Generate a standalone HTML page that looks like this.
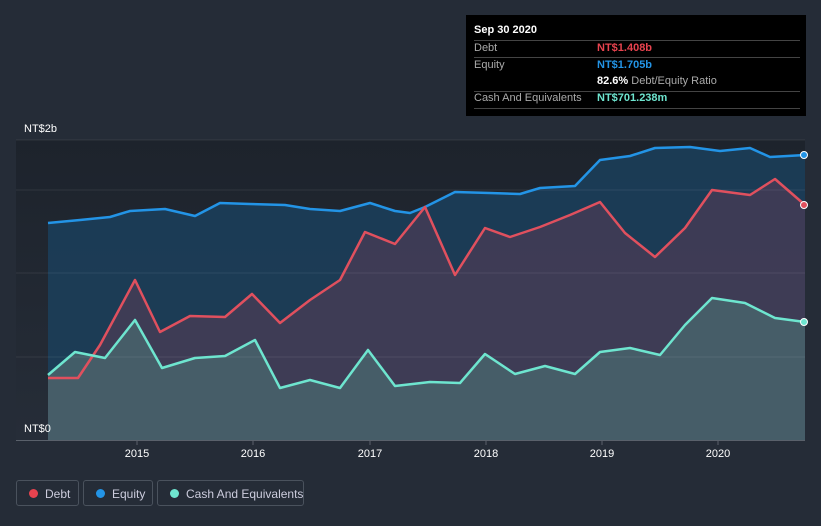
<!DOCTYPE html>
<html><head><style>
body{margin:0;width:821px;height:526px;background:#252c37;font-family:"Liberation Sans",sans-serif;overflow:hidden;position:relative}
.tt{position:absolute;left:466px;top:15px;width:340px;height:101px;background:#000;color:#fff;font-size:11px}
.tt .r{position:absolute;left:8px;right:6px;border-top:1px solid #444}
.tt span{position:absolute;white-space:nowrap}
.leg{position:absolute;top:480px;height:26px;border:1px solid #4a525d;border-radius:3px;color:#ccd;font-size:12px;line-height:26px;box-sizing:border-box;white-space:nowrap}
.leg i{position:absolute;left:12px;top:8px;width:9px;height:9px;border-radius:50%}
polyline{stroke-linejoin:round}
</style></head><body>
<svg width="821" height="526" style="position:absolute;left:0;top:0">
<defs>
<linearGradient id="bg" x1="0" y1="0" x2="0" y2="1"><stop offset="0" stop-color="#1d232c"/><stop offset="1" stop-color="#262d38"/></linearGradient>
</defs>
<rect x="16" y="140" width="789" height="300" fill="url(#bg)"/>
<polygon fill="#1b3f5c" fill-opacity="0.85" points="48,440 48,223 80,220 110,217 130,211 165,209 195,216 220,203 250,204 285,205 310,209 340,211 370,203 395,211 410,213 425,207 455,192 490,193 520,194 540,188 575,186 600,160 630,156 655,148 690,147 720,151 750,148 770,157 805,155 805,440"/>
<polygon fill="#4a3c55" fill-opacity="0.75" points="48,440 48,378 78,378 100,345 135,280 160,332 190,316 225,317 252,294 280,323 310,300 340,280 365,232 395,244 425,207 455,275 485,228 510,237 540,227 570,215 600,202 625,233 655,257 685,228 712,190 750,195 775,179 805,205 805,440"/>
<polygon fill="#47616a" fill-opacity="0.9" points="48,440 48,375 75,352 105,358 135,320 162,368 195,358 225,356 255,340 280,388 310,380 340,388 368,350 395,386 430,382 460,383 485,354 515,374 545,366 575,374 600,352 630,348 660,355 685,325 712,298 745,303 775,318 805,322 805,440"/>
<g stroke="#ffffff" stroke-opacity="0.08"><line x1="16" y1="140" x2="805" y2="140"/><line x1="16" y1="190" x2="805" y2="190"/><line x1="16" y1="273" x2="805" y2="273"/><line x1="16" y1="357" x2="805" y2="357"/></g>
<polyline fill="none" stroke="#2394e6" stroke-width="2.5" points="48,223 80,220 110,217 130,211 165,209 195,216 220,203 250,204 285,205 310,209 340,211 370,203 395,211 410,213 425,207 455,192 490,193 520,194 540,188 575,186 600,160 630,156 655,148 690,147 720,151 750,148 770,157 805,155"/>
<polyline fill="none" stroke="#e0505e" stroke-width="2.5" points="48,378 78,378 100,345 135,280 160,332 190,316 225,317 252,294 280,323 310,300 340,280 365,232 395,244 425,207 455,275 485,228 510,237 540,227 570,215 600,202 625,233 655,257 685,228 712,190 750,195 775,179 805,205"/>
<polyline fill="none" stroke="#6ee5cf" stroke-width="2.5" points="48,375 75,352 105,358 135,320 162,368 195,358 225,356 255,340 280,388 310,380 340,388 368,350 395,386 430,382 460,383 485,354 515,374 545,366 575,374 600,352 630,348 660,355 685,325 712,298 745,303 775,318 805,322"/>
<circle cx="804" cy="155" r="3.5" fill="#2394e6" stroke="#fff" stroke-width="1"/>
<circle cx="804" cy="205" r="3.5" fill="#e0505e" stroke="#fff" stroke-width="1"/>
<circle cx="804" cy="322" r="3.5" fill="#6ee5cf" stroke="#fff" stroke-width="1"/>
<line x1="16" y1="440.5" x2="805" y2="440.5" stroke="#5a616b"/>
<g stroke="#5a616b"><line x1="137" y1="440" x2="137" y2="445"/><line x1="253" y1="440" x2="253" y2="445"/><line x1="370" y1="440" x2="370" y2="445"/><line x1="486" y1="440" x2="486" y2="445"/><line x1="602" y1="440" x2="602" y2="445"/><line x1="718" y1="440" x2="718" y2="445"/></g>
<g fill="#fff" font-size="11" text-anchor="middle"><text x="137" y="457">2015</text><text x="253" y="457">2016</text><text x="370" y="457">2017</text><text x="486" y="457">2018</text><text x="602" y="457">2019</text><text x="718" y="457">2020</text></g>
<text x="24" y="132" fill="#fff" font-size="11">NT$2b</text>
<text x="24" y="432" fill="#fff" font-size="11">NT$0</text>
</svg>
<div class="tt">
<span style="left:8px;top:9px;font-weight:bold">Sep 30 2020</span>
<div class="r" style="top:25px"></div>
<span style="left:8px;top:27px;color:#aaa">Debt</span><span style="left:131px;top:27px;color:#e8434f;font-weight:bold">NT$1.408b</span>
<div class="r" style="top:42px"></div>
<span style="left:8px;top:44px;color:#aaa">Equity</span><span style="left:131px;top:44px;color:#2394e6;font-weight:bold">NT$1.705b</span>
<span style="left:131px;top:60px"><b>82.6%</b> <span style="position:static;color:#aaa">Debt/Equity Ratio</span></span>
<div class="r" style="top:76px"></div>
<span style="left:8px;top:77px;color:#aaa">Cash And Equivalents</span><span style="left:131px;top:77px;color:#6ee5cf;font-weight:bold">NT$701.238m</span>
<div class="r" style="top:93px"></div>
</div>
<div class="leg" style="left:16px;width:63px"><i style="background:#e8434f"></i><span style="position:absolute;left:28px">Debt</span></div>
<div class="leg" style="left:83px;width:70px"><i style="background:#2394e6"></i><span style="position:absolute;left:28px">Equity</span></div>
<div class="leg" style="left:157px;width:147px"><i style="background:#6ee5cf"></i><span style="position:absolute;left:28px">Cash And Equivalents</span></div>
</body></html>
